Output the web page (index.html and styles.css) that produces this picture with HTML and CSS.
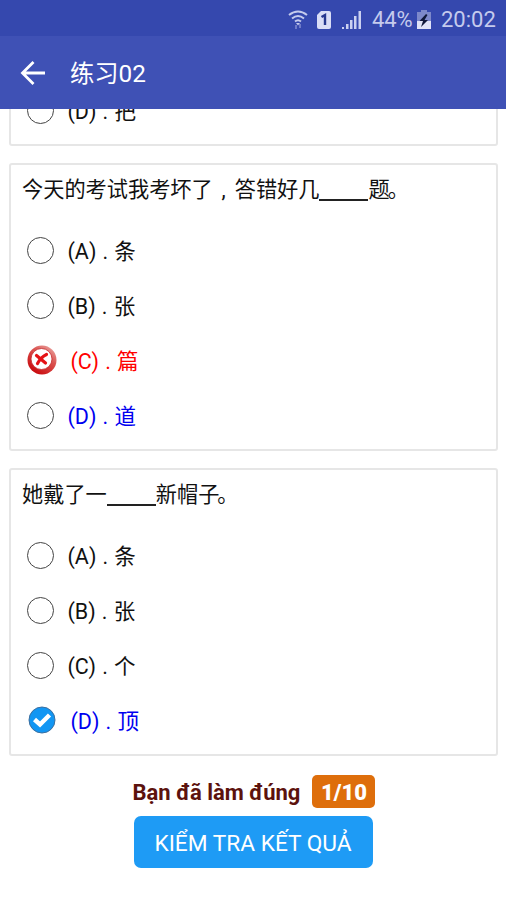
FILE: index.html
```html
<!DOCTYPE html>
<html lang="zh-CN">
<head>
<meta charset="utf-8">
<title>练习02</title>
<link rel="stylesheet" href="styles.css">
</head>
<body>
<div class="status">
  <svg class="wifi" width="20" height="20" viewBox="0 0 20 20" fill="none" stroke="#c5cbed" stroke-width="2"><path d="M1 5Q10-2 19 5M4 8.500Q10 3.500 16 8.500M7 11.500Q10 9 13 11.500"/><path d="M8 13h4L10 15.500z" fill="#c5cbed" stroke="none"/><path d="M8 15v4M12 14v4" stroke="#6f7bc8" stroke-width="2"/></svg>
  <svg class="sim" width="16" height="20" viewBox="0 0 16 20"><path d="M5 1h8q2 0 2 2v14q0 2-2 2H3q-2 0-2-2V5z" fill="#d9ddf6"/><path d="M5.500 7L9 5v10" fill="none" stroke="#26378f" stroke-width="2.400"/></svg>
  <svg class="signal" width="20" height="20" viewBox="0 0 20 20" fill="#cbd1f1"><path d="M0 17h2v2H0zM4 14h2.500v5H4zM8 10h2.500v9H8zM12 6h2.500v13H12zM16.500 1H19v18h-2.500z"/></svg>
  <span class="percent">44%</span>
  <svg class="battery" width="16" height="20" viewBox="0 0 16 20"><path d="M5 0h6v2h4v10H1V2h4z" fill="#7d88ca"/><path d="M1 11h14v8H1z" fill="#e0e3f8"/><path d="M10 4L3.500 11H7l-2 6 7-7H8.500l3-5z" fill="#10183b"/></svg>
  <span class="clock">20:02</span>
</div>
<header class="appbar">
  <svg width="26" height="26" viewBox="0 0 26 26" fill="none" stroke="#fff" stroke-width="2.800"><path d="M13.500 2L2.500 13l11 11M3 13h22"/></svg>
  <h1>练习02</h1>
</header>
<main class="list">
  <section class="card card-first">
    <div class="option"><i class="radio"></i><span>(D) . 把</span></div>
  </section>
  <section class="card">
    <p class="question">今天的考试我考坏了<span class="comma">,</span>答错好几<span class="blank"></span>题<span class="stop">。</span></p>
    <div class="option"><i class="radio"></i><span>(A) . 条</span></div>
    <div class="option"><i class="radio"></i><span>(B) . 张</span></div>
    <div class="option wrong">
      <svg width="30" height="30" viewBox="0 0 30 30"><defs><linearGradient id="ring" x1="1" y1="0" x2="0.300" y2="1"><stop offset="0" stop-color="#eeb4b0"/><stop offset=".45" stop-color="#da5350"/><stop offset="1" stop-color="#c9080c"/></linearGradient></defs><circle cx="15" cy="15" r="14.500" fill="url(#ring)"/><circle cx="14.500" cy="14" r="10.500" fill="#fff" stroke="#c52a2c" stroke-width=".8"/><path d="M9.500 10.500l9 7.500M19.500 9.500Q14 12 10.500 18.500" fill="none" stroke="#e51216" stroke-width="3.200" stroke-linecap="round"/></svg>
      <span>(C) . 篇</span>
    </div>
    <div class="option answer"><i class="radio"></i><span>(D) . 道</span></div>
  </section>
  <section class="card">
    <p class="question">她戴了一<span class="blank"></span>新帽子<span class="stop">。</span></p>
    <div class="option"><i class="radio"></i><span>(A) . 条</span></div>
    <div class="option"><i class="radio"></i><span>(B) . 张</span></div>
    <div class="option"><i class="radio"></i><span>(C) . 个</span></div>
    <div class="option answer picked">
      <svg width="28" height="28" viewBox="0 0 28 28"><circle cx="14" cy="14" r="13" fill="#1296f3" stroke="#3c6f9f"/><path d="M6.500 13.500l5.500 5L21.500 9" fill="none" stroke="#fff" stroke-width="4.500"/></svg>
      <span>(D) . 顶</span>
    </div>
  </section>
</main>
<footer class="result" lang="vi">
  <div class="score"><span>Bạn đã làm đúng</span><b>1/10</b></div>
  <button class="check" type="button">KIỂM TRA KẾT QUẢ</button>
</footer>
</body>
</html>
```
FILE: styles.css
```css
* { box-sizing: border-box; }

body {
  margin: 0;
  height: 900px;
  overflow: hidden;
  display: flex;
  flex-direction: column;
  background: #fff;
  color: #111;
  font-family: Roboto, "Noto Sans CJK SC", sans-serif;
}

svg { display: block; flex: none; }

.status {
  flex: none;
  height: 36px;
  padding: 3px 9px 0 0;
  display: flex;
  align-items: center;
  justify-content: flex-end;
  background: #3548ae;
  color: #c5cbed;
  font-size: 22px;
  line-height: 34px;
}
.sim { margin-left: 8px; }
.signal { margin-left: 10px; }
.percent { width: 42px; margin-left: 10px; letter-spacing: -.1px; white-space: nowrap; }
.battery { margin-left: 2px; }
.clock { width: 56px; margin-left: 9px; white-space: nowrap; }

.appbar {
  flex: none;
  height: 73px;
  padding-left: 20px;
  display: flex;
  align-items: center;
  gap: 24px;
  background: #3f51b5;
  color: #fff;
}
.appbar h1 {
  margin: 2px 0 0;
  font-size: 24.3px;
  line-height: 32px;
  font-weight: 400;
}

.list {
  flex: none;
  height: 647px;
  padding: 0 8px 0 9px;
  overflow: hidden;
  display: flex;
  flex-direction: column;
  justify-content: flex-end;
  gap: 17px;
}
.card {
  flex: none;
  height: 288px;
  padding: 0 12px 0 11px;
  border: 2px solid #e6e6e6;
  border-radius: 3px;
}
.card-first {
  height: 70px;
  padding-top: 5px;
}
.question {
  margin: 0;
  height: 58.5px;
  padding-top: 9px;
  font-size: 21.2px;
  line-height: 32px;
  white-space: nowrap;
}
.comma {
  display: inline-block;
  width: 22px;
  text-align: center;
}
.stop { margin-left: -2px; }
.blank {
  display: inline-block;
  width: 49px;
  height: 2px;
  background: #222;
  vertical-align: -4px;
}
.option {
  height: 54.8px;
  padding-left: 5px;
  display: flex;
  align-items: center;
  gap: 14px;
  font-size: 21.5px;
  line-height: 32px;
  white-space: nowrap;
}
.option span {
  padding-top: 3px;
  margin-left: -.5px;
  word-spacing: .8px;
}
.radio {
  flex: none;
  width: 27px;
  height: 27px;
  border: 1.5px solid #444;
  border-radius: 50%;
}
.wrong { color: #f00; }
.answer { color: #0000f0; }
.picked { padding-left: 6px; gap: 15px; }

.result {
  display: flex;
  flex-direction: column;
  align-items: center;
  padding: 19px 0 0;
}
.score {
  display: flex;
  align-items: center;
  gap: 12px;
  margin-left: 2px;
  color: #5c120d;
  font-size: 22px;
  font-weight: 700;
}
.score span { padding-top: 2px; }
.score b {
  width: 63px;
  height: 33px;
  border-radius: 5px;
  background: #de6e0b;
  color: #fff;
  line-height: 35px;
  text-align: center;
}
.check {
  width: 239px;
  height: 52px;
  margin: 8px 0 0;
  padding: 2px 0 0;
  border: 0;
  border-radius: 7px;
  background: #1e9bf5;
  color: #fff;
  font: 400 22.7px/49px Roboto, sans-serif;
  white-space: nowrap;
}
```
